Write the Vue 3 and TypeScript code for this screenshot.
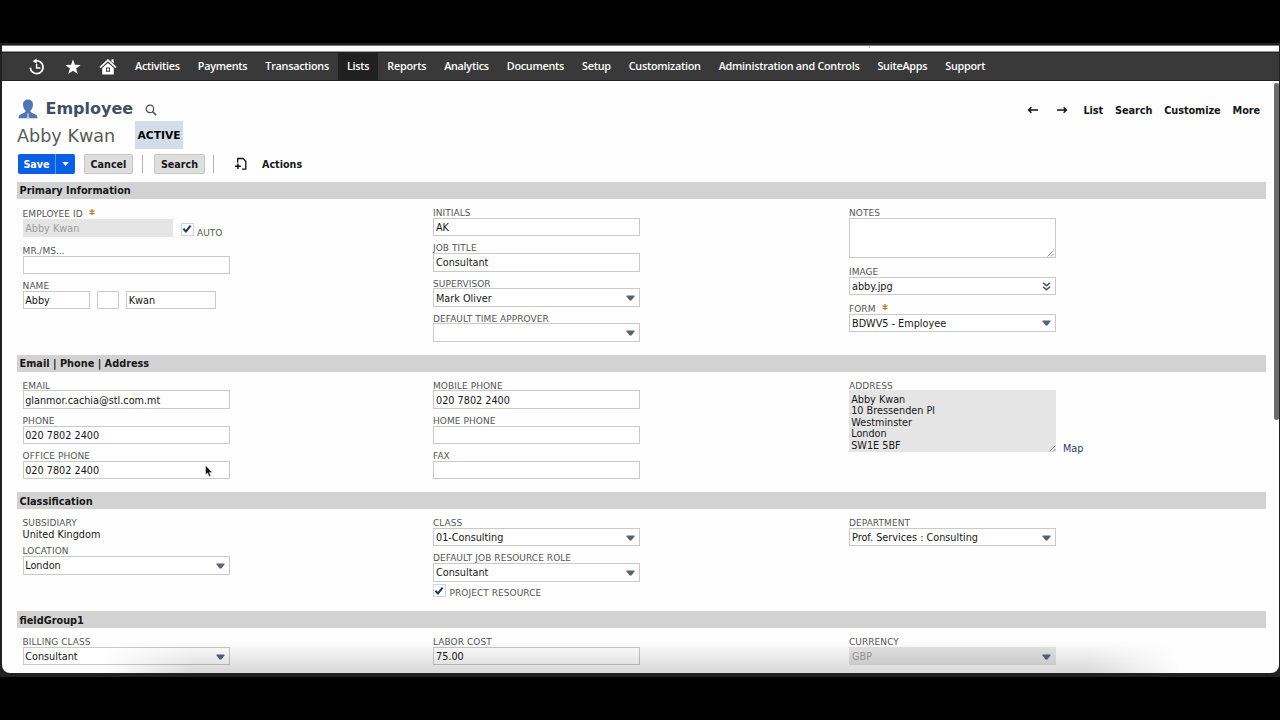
<script setup lang="ts">
type Kind = 'input' | 'select' | 'disabled-select' | 'file' | 'textarea' | 'address' | 'text' | 'auto' | 'name' | 'check'

interface Field {
  label: string
  kind: Kind
  value?: string
  required?: boolean
}

interface Section {
  id: string
  title: string
  columns: Field[][]
}

const navItems: string[] = [
  'Activities', 'Payments', 'Transactions', 'Lists', 'Reports', 'Analytics', 'Documents',
  'Setup', 'Customization', 'Administration and Controls', 'SuiteApps', 'Support',
]

const addressLines: string[] = ['Abby Kwan', '10 Bressenden Pl', 'Westminster', 'London', 'SW1E 5BF']

const sections: Section[] = [
  {
    id: 'primary',
    title: 'Primary Information',
    columns: [
      [
        { label: 'EMPLOYEE ID', kind: 'auto', value: 'Abby Kwan', required: true },
        { label: 'MR./MS...', kind: 'input' },
        { label: 'NAME', kind: 'name' },
      ],
      [
        { label: 'INITIALS', kind: 'input', value: 'AK' },
        { label: 'JOB TITLE', kind: 'input', value: 'Consultant' },
        { label: 'SUPERVISOR', kind: 'select', value: 'Mark Oliver' },
        { label: 'DEFAULT TIME APPROVER', kind: 'select' },
      ],
      [
        { label: 'NOTES', kind: 'textarea' },
        { label: 'IMAGE', kind: 'file', value: 'abby.jpg' },
        { label: 'FORM', kind: 'select', value: 'BDWV5 - Employee', required: true },
      ],
    ],
  },
  {
    id: 'contact',
    title: 'Email | Phone | Address',
    columns: [
      [
        { label: 'EMAIL', kind: 'input', value: 'glanmor.cachia@stl.com.mt' },
        { label: 'PHONE', kind: 'input', value: '020 7802 2400' },
        { label: 'OFFICE PHONE', kind: 'input', value: '020 7802 2400' },
      ],
      [
        { label: 'MOBILE PHONE', kind: 'input', value: '020 7802 2400' },
        { label: 'HOME PHONE', kind: 'input' },
        { label: 'FAX', kind: 'input' },
      ],
      [{ label: 'ADDRESS', kind: 'address' }],
    ],
  },
  {
    id: 'classification',
    title: 'Classification',
    columns: [
      [
        { label: 'SUBSIDIARY', kind: 'text', value: 'United Kingdom' },
        { label: 'LOCATION', kind: 'select', value: 'London' },
      ],
      [
        { label: 'CLASS', kind: 'select', value: '01-Consulting' },
        { label: 'DEFAULT JOB RESOURCE ROLE', kind: 'select', value: 'Consultant' },
        { label: 'PROJECT RESOURCE', kind: 'check' },
      ],
      [{ label: 'DEPARTMENT', kind: 'select', value: 'Prof. Services : Consulting' }],
    ],
  },
  {
    id: 'group',
    title: 'fieldGroup1',
    columns: [
      [{ label: 'BILLING CLASS', kind: 'select', value: 'Consultant' }],
      [{ label: 'LABOR COST', kind: 'input', value: '75.00' }],
      [{ label: 'CURRENCY', kind: 'disabled-select', value: 'GBP' }],
    ],
  },
]
</script>

<template>
  <div class="screen">
    <div class="window">
      <div class="top-strip"><i></i></div>
      <nav class="nav">
        <svg class="nav-icon history" viewBox="0 0 18 18" width="18" height="18">
          <path d="M7 3 A6.4 6.4 0 1 1 2.3 9.6" fill="none" stroke="#fff" stroke-width="1.7" />
          <path d="M8.6 0.6 L4.6 3.2 L8.6 5.6 Z" fill="#fff" />
          <path d="M8.6 5.8 V10 H12.4" fill="none" stroke="#fff" stroke-width="1.5" />
        </svg>
        <svg class="nav-icon star" viewBox="0 0 16 16" width="16" height="16">
          <path d="M8 0.3 L9.9 5.8 L15.7 5.9 L11.1 9.4 L12.8 15 L8 11.7 L3.2 15 L4.9 9.4 L0.3 5.9 L6.1 5.8 Z" fill="#fff" />
        </svg>
        <svg class="nav-icon home" viewBox="0 0 18 18" width="18" height="18">
          <path d="M1 9.6 L9 2.2 L17 9.6" fill="none" stroke="#fff" stroke-width="1.7" />
          <path d="M12.4 1.3 H14.6 V5.6 L12.4 3.6 Z" fill="#fff" />
          <path d="M3.2 10 L9 4.9 L14.8 10 V16.5 H3.2 Z M7 9.4 V13.8 H11 V9.4 Z" fill="#fff" fill-rule="evenodd" />
          <path d="M8 10.4 H10 V12.8 H8 Z" fill="#fff" />
        </svg>
        <a v-for="item in navItems" :key="item" class="nav-item" :class="{ active: item === 'Lists' }">{{ item }}</a>
      </nav>

      <main class="page">
        <header class="title-row">
          <svg class="person" viewBox="0 0 20 20" width="20" height="20">
            <path d="M10 0.5 C13 0.5 15 2.5 15 5.6 C15 8.5 13.8 10.6 12.3 11.8 C12.4 13.6 14 14 16.2 14.7 C18.6 15.5 19.4 16.6 19.5 19.3 H0.5 C0.6 16.6 1.4 15.5 3.8 14.7 C6 14 7.6 13.6 7.7 11.8 C6.2 10.6 5 8.5 5 5.6 C5 2.5 7 0.5 10 0.5 Z" fill="#5373b4" />
            <path d="M8.5 14.6 H11.5 L10.6 16 L11.5 19.3 H8.5 L9.4 16 Z" fill="#a9c5ec" />
          </svg>
          <h1>Employee</h1>
          <svg class="magnifier" viewBox="0 0 12 12" width="12" height="12">
            <circle cx="4.9" cy="4.9" r="3.7" fill="none" stroke="#4c4c4c" stroke-width="1.2" />
            <path d="M7.6 7.6 L11.2 11.2" stroke="#4c4c4c" stroke-width="1.5" />
          </svg>
          <div class="page-links">
            <svg viewBox="0 0 12 8" width="12" height="8"><path d="M11 4 H1.6 M4.4 1.2 L1.6 4 L4.4 6.8" fill="none" stroke="#111" stroke-width="1.5" /></svg>
            <svg class="next" viewBox="0 0 12 8" width="12" height="8"><path d="M1 4 H10.4 M7.6 1.2 L10.4 4 L7.6 6.8" fill="none" stroke="#111" stroke-width="1.5" /></svg>
            <a>List</a><a>Search</a><a>Customize</a><a>More</a>
          </div>
        </header>

        <div class="record-row">
          <span class="record-name">Abby Kwan</span>
          <span class="badge">ACTIVE</span>
        </div>

        <div class="toolbar">
          <div class="save">
            <span class="save-text">Save</span>
            <span class="save-drop"><svg viewBox="0 0 7 4" width="7" height="4"><path d="M0.2 0 H6.8 L3.5 4 Z" fill="#fff" /></svg></span>
          </div>
          <span class="btn cancel">Cancel</span>
          <i class="sep"></i>
          <span class="btn search">Search</span>
          <i class="sep second"></i>
          <svg class="new-doc" viewBox="0 0 12 14" width="12" height="14">
            <path d="M2.7 5.5 V1.5 H8 L10.8 4.3 V12.2 H7" fill="none" stroke="#111" stroke-width="1.3" />
            <path d="M0 9.2 H5.8 M2.9 6.4 V12" stroke="#111" stroke-width="1.5" />
          </svg>
          <span class="actions">Actions</span>
        </div>

        <section v-for="section in sections" :key="section.id" class="section" :class="section.id">
          <h2>{{ section.title }}</h2>
          <div class="columns">
            <div v-for="(column, index) in section.columns" :key="index" class="column">
              <div v-for="field in column" :key="field.label" class="field" :class="'f-' + field.kind">
                <template v-if="field.kind === 'check'">
                  <span class="checkbox"><svg viewBox="0 0 10 10" width="10" height="10"><path d="M1.4 4.8 L3.9 7.4 L8.6 1.6" fill="none" stroke="#1d3763" stroke-width="2" /></svg></span>
                  <label>{{ field.label }}</label>
                </template>
                <template v-else>
                  <label>{{ field.label }}<svg v-if="field.required" class="required" viewBox="0 0 6 6" width="6" height="6"><path d="M3 0 V6 M0.4 1.5 L5.6 4.5 M5.6 1.5 L0.4 4.5" stroke="#b98220" stroke-width="1.3" /></svg></label>
                  <div v-if="field.kind === 'auto'" class="line">
                    <div class="box disabled">{{ field.value }}</div>
                    <span class="checkbox"><svg viewBox="0 0 10 10" width="10" height="10"><path d="M1.4 4.8 L3.9 7.4 L8.6 1.6" fill="none" stroke="#1d3763" stroke-width="2" /></svg></span>
                    <span class="auto-label">AUTO</span>
                  </div>
                  <div v-else-if="field.kind === 'name'" class="line">
                    <div class="box first">Abby</div>
                    <div class="box middle"></div>
                    <div class="box last">Kwan</div>
                  </div>
                  <div v-else-if="field.kind === 'text'" class="plain">{{ field.value }}</div>
                  <div v-else-if="field.kind === 'textarea'" class="box area">
                    <svg class="grip" viewBox="0 0 7 7" width="7" height="7"><path d="M0.5 6.5 L6.5 0.5 M4 6.5 L6.5 4" stroke="#777" stroke-width="0.8" /></svg>
                  </div>
                  <div v-else-if="field.kind === 'address'" class="line address-line">
                    <div class="address">
                      <div v-for="line in addressLines" :key="line">{{ line }}</div>
                      <svg class="grip" viewBox="0 0 7 7" width="7" height="7"><path d="M0.5 6.5 L6.5 0.5 M4 6.5 L6.5 4" stroke="#777" stroke-width="0.8" /></svg>
                    </div>
                    <a class="map">Map</a>
                  </div>
                  <div v-else class="box" :class="{ muted: field.kind === 'disabled-select' }">
                    <span>{{ field.value }}</span>
                    <svg v-if="field.kind === 'select' || field.kind === 'disabled-select'" class="arrow" viewBox="0 0 9 6" width="9" height="6"><path d="M0.6 0.4 H8.4 L8.5 1.6 L5.4 5.5 H3.6 L0.5 1.6 Z" fill="#566378" /></svg>
                    <svg v-if="field.kind === 'file'" class="arrow" viewBox="0 0 9 9" width="9" height="9"><path d="M1 0.8 L4.5 3.7 L8 0.8 M1 4.8 L4.5 7.7 L8 4.8" fill="none" stroke="#4d5e78" stroke-width="1.6" /></svg>
                  </div>
                </template>
              </div>
            </div>
          </div>
        </section>
      </main>
      <div class="scroll-thumb"></div>
      <div class="bottom-shade"></div>
    </div>
    <svg class="cursor" viewBox="0 0 8 12" width="8" height="12">
      <path d="M0.6 0.6 V9.6 L2.6 7.9 L4.2 11.4 L5.8 10.7 L4.3 7.4 H7.2 Z" fill="#111" stroke="#fff" stroke-width="0.4" />
    </svg>
  </div>
</template>

<style>
html,
body {
  margin: 0;
  background: #000;
  overflow: hidden;
}
</style>

<style scoped>
* {
  box-sizing: border-box;
}
.screen {
  position: relative;
  width: 1280px;
  height: 720px;
  padding: 45px 1px 0 2px;
  background: linear-gradient(#000 43px, #202020 43px, #202020 677px, #000 677px);
  font-family: "DejaVu Sans", Verdana, sans-serif;
  font-size: 9.7px;
  color: #161616;
  overflow: hidden;
}
.window {
  position: relative;
  height: 628px;
  background: #fefefe;
  border-top: 1px solid #777;
  border-radius: 0 0 8px 8px;
  overflow: hidden;
}
.top-strip {
  height: 6px;
  border-bottom: 1px solid #999;
}
.top-strip i {
  display: block;
  width: 1px;
  height: 2px;
  margin-left: 867px;
  background: #bbb;
}
.nav {
  display: flex;
  align-items: center;
  height: 29px;
  background: #393939;
  border-top: 1px solid #222;
  border-bottom: 1px solid #222;
  color: #fff;
  font: 600 10.8px "Open Sans", "Noto Sans", sans-serif;
  letter-spacing: -0.26px;
}
.nav-icon {
  flex: none;
}
.history {
  margin-left: 26px;
}
.star {
  margin-left: 19px;
}
.home {
  margin: 0 8.8px 0 18.3px;
}
.nav-item {
  height: 27px;
  line-height: 26px;
  padding: 0 9px;
  white-space: nowrap;
}
.nav-item.active {
  background: #202020;
}
.page {
  padding: 0 13px 0 15px;
}
.title-row {
  display: flex;
  align-items: center;
  height: 40px;
  padding-top: 16px;
}
.person {
  margin-left: 1px;
}
h1 {
  margin: 0 0 0 7.5px;
  font-size: 16px;
  line-height: 22px;
  color: #414f62;
}
.magnifier {
  margin: 2px 0 0 11.5px;
}
.page-links {
  display: flex;
  align-items: center;
  margin-left: auto;
  padding: 2px 6px 0 0;
  font-size: 9.75px;
  letter-spacing: -0.09px;
  font-weight: bold;
}
.page-links .next {
  margin-left: 17px;
}
.page-links a {
  margin-left: 12px;
}
.page-links .next + a {
  margin-left: 15px;
}
.record-row {
  display: flex;
  align-items: center;
  height: 28px;
}
.record-name {
  width: 118px;
  padding-top: 2px;
  font-size: 17.6px;
  color: #5a5a5a;
}
.badge {
  width: 48px;
  height: 28px;
  line-height: 29px;
  text-align: center;
  font-size: 10.7px;
  font-weight: bold;
  background: #d3dde8;
  color: #000;
}
.toolbar {
  display: flex;
  align-items: center;
  height: 33px;
  padding: 0 0 3px 1px;
  font-size: 9.6px;
  font-weight: bold;
}
.save {
  display: flex;
  width: 57px;
  height: 20px;
  line-height: 21px;
  color: #fff;
  background: #0a5fe4;
  border-radius: 2px;
}
.save-text {
  width: 38px;
  text-align: center;
  border-right: 1px solid #5f97f0;
}
.save-drop {
  display: flex;
  flex: 1;
  align-items: center;
  justify-content: center;
}
.btn {
  height: 20px;
  line-height: 19px;
  text-align: center;
  background: #dedede;
  border: 1px solid #c6c6c6;
  border-radius: 2px;
}
.cancel {
  width: 49px;
  margin-left: 9px;
}
.search {
  width: 51px;
  margin-left: 11px;
}
.sep {
  width: 1px;
  height: 18px;
  margin-left: 9px;
  background: #b4b4b4;
}
.sep.second {
  margin-left: 8px;
}
.new-doc {
  margin-left: 21px;
}
.actions {
  margin-left: 15px;
  padding-top: 1px;
}
.section h2 {
  margin: 0;
  height: 17px;
  padding-left: 2.5px;
  line-height: 18px;
  font-size: 9.75px;
  background: #d2d2d2;
}
.section.classification h2,
.section.group h2 {
  line-height: 19px;
}
.primary {
  height: 172.5px;
}
.contact {
  height: 137.5px;
}
.classification {
  height: 119px;
}
.columns {
  display: grid;
  grid-template-columns: 410.4px 416px 1fr;
  padding: 8.3px 0 0 5.6px;
}
.field {
  margin-bottom: 6.1px;
}
.primary .column:first-child {
  padding-top: 1px;
}
label {
  display: block;
  height: 10.6px;
  line-height: 12.5px;
  font-size: 9px;
  letter-spacing: 0.06px;
  color: #555;
  white-space: nowrap;
}
.required {
  margin: 0 0 2px 6.5px;
}
.box {
  display: flex;
  align-items: center;
  justify-content: space-between;
  width: 207px;
  height: 18.5px;
  padding: 1px 4px 0 2px;
  background: #fff;
  border: 1px solid #c9c9c9;
  white-space: nowrap;
}
.column:first-child .box {
  padding-left: 1.6px;
}
.line {
  display: flex;
}
.disabled,
.muted {
  color: #9c9c9c;
  background: #e5e5e5;
  border-color: #e5e5e5;
}
.disabled {
  width: 150.5px;
}
.checkbox {
  display: flex;
  flex: none;
  align-items: center;
  justify-content: center;
  width: 13px;
  height: 13px;
  background: #fff;
  border: 1px solid #ccd4dc;
}
.f-auto .checkbox {
  margin: 4px 0 0 7.5px;
}
.auto-label {
  margin: 8px 0 0 3.5px;
  line-height: 12px;
  font-size: 9px;
  color: #555;
}
.first {
  width: 67px;
}
.middle {
  width: 22px;
  margin-left: 7.5px;
}
.last {
  width: 90px;
  margin-left: 7px;
}
.area {
  height: 40.5px;
  padding: 0 1px 0 0;
  align-items: flex-end;
  justify-content: flex-end;
}
.f-textarea {
  margin-bottom: 7.9px;
}
.f-file {
  margin-bottom: 7.6px;
}
.plain {
  height: 12px;
  line-height: 13px;
}
.f-text {
  margin-bottom: 5.6px;
}
.address {
  position: relative;
  width: 207px;
  height: 61.5px;
  padding: 3.2px 2.2px 0;
  line-height: 11.5px;
  background: #e5e5e5;
}
.address .grip {
  position: absolute;
  right: 0;
  bottom: 0;
}
.address-line {
  align-items: flex-end;
}
.map {
  margin-left: 7px;
  line-height: 12px;
  height: 8.5px;
  color: #2a3f68;
}
.f-check {
  display: flex;
  margin-top: -3.4px;
}
.f-check label {
  margin: 3px 0 0 3.5px;
}
.scroll-thumb {
  position: absolute;
  top: 37px;
  right: 0;
  width: 5px;
  height: 337px;
  border-radius: 2px;
  background: #6c6c6c;
}
.bottom-shade {
  position: absolute;
  left: 100px;
  right: 100px;
  bottom: 0;
  height: 32px;
  background: linear-gradient(rgba(0, 0, 0, 0), rgba(0, 0, 0, 0.15));
  mask-image: linear-gradient(90deg, transparent, #000 90px, #000 calc(100% - 90px), transparent);
}
.cursor {
  position: absolute;
  left: 205px;
  top: 465px;
}
</style>
